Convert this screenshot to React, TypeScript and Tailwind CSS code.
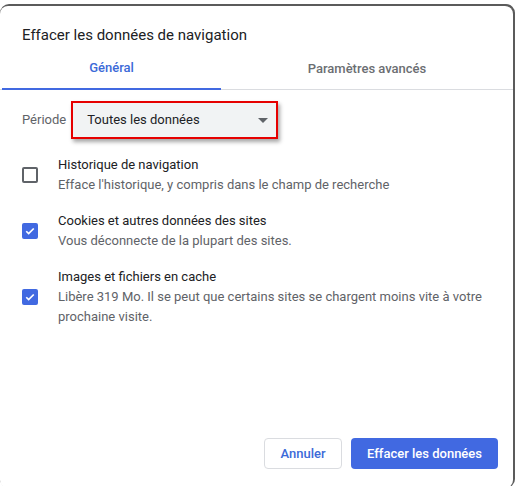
import React from 'react';

const items = [
  {
    title: 'Historique de navigation',
    desc: "Efface l'historique, y compris dans le champ de recherche",
    checked: false,
  },
  {
    title: 'Cookies et autres données des sites',
    desc: 'Vous déconnecte de la plupart des sites.',
    checked: true,
  },
  {
    title: 'Images et fichiers en cache',
    desc: 'Libère 319 Mo. Il se peut que certains sites se chargent moins vite à votre prochaine visite.',
    checked: true,
  },
];

function Checkbox({ checked }: { checked: boolean }) {
  if (!checked) {
    return <div className="w-4 h-4 shrink-0 rounded-[2px] border-2 border-[#5f6368]" />;
  }
  return (
    <div className="w-4 h-4 shrink-0 rounded-[2px] bg-[#4169e1] flex items-center justify-center">
      <svg width="12" height="12" viewBox="0 0 24 24" fill="none" stroke="white" strokeWidth="3.4">
        <path d="M4.5 12.5l4.8 4.8L19.5 7" />
      </svg>
    </div>
  );
}

export default function App() {
  return (
    <div className="w-[521px] h-[486px] bg-white overflow-hidden" style={{ fontFamily: 'Roboto, "Liberation Sans", sans-serif' }}>
      {/* backdrop edge + dialog */}
      <div className="mt-[4px] w-[515px] h-[484px] bg-[#5b5b5b] pt-[2px] pr-[2px] rounded-[9px]">
        <div className="h-full bg-white rounded-[8px] flex flex-col">
          <div className="pt-[19px] px-[22px] text-[15px] leading-[20px] text-[#202124]">
            Effacer les données de navigation
          </div>

          {/* Tabs */}
          <div className="mt-[3px] flex border-b border-[#dadce0] pl-[2px]">
            <div className="w-[219px] h-[42px] -mb-px flex items-center justify-center border-b-2 border-[#4169e1] text-[13px] font-medium text-[#3c6ad8]">
              Général
            </div>
            <div className="flex-1 h-[41px] flex items-center justify-center text-[13px] font-medium text-[#6b6e72]">
              Paramètres avancés
            </div>
          </div>

          {/* Période */}
          <div className="mt-[11px] px-[22px] flex items-center gap-[5px]">
            <span className="text-[13px] text-[#5f6368]">Période</span>
            <div className="w-[207px] h-[38px] border-2 border-[#e60000] bg-[#f1f3f4] shadow-[2px_3px_4px_rgba(0,0,0,0.35)] flex items-center justify-between pl-[14px] pr-[8px]">
              <span className="text-[13px] text-[#202124]">Toutes les données</span>
              <svg width="10" height="5" viewBox="0 0 10 5">
                <path d="M0 0h10L5 5z" fill="#5f6368" />
              </svg>
            </div>
          </div>

          {/* Options */}
          <div className="mt-[16px] flex flex-col gap-[16px]">
            {items.map((it) => (
              <div key={it.title} className="flex items-center pl-[22px] gap-[20px]">
                <Checkbox checked={it.checked} />
                <div className="w-[440px] text-[13px] leading-[20px]">
                  <div className="text-[#202124]">{it.title}</div>
                  <div className="text-[#5f6368]">{it.desc}</div>
                </div>
              </div>
            ))}
          </div>

          {/* Buttons */}
          <div className="mt-auto pb-[19px] pr-[15px] flex justify-end gap-[9px]">
            <button className="w-[78px] h-[31px] rounded-[4px] border border-[#dadce0] bg-white text-[13px] font-medium text-[#3c6ad8]">
              Annuler
            </button>
            <button className="w-[147px] h-[31px] rounded-[4px] bg-[#4169e1] text-[13px] font-medium text-white">
              Effacer les données
            </button>
          </div>
        </div>
      </div>
    </div>
  );
}
